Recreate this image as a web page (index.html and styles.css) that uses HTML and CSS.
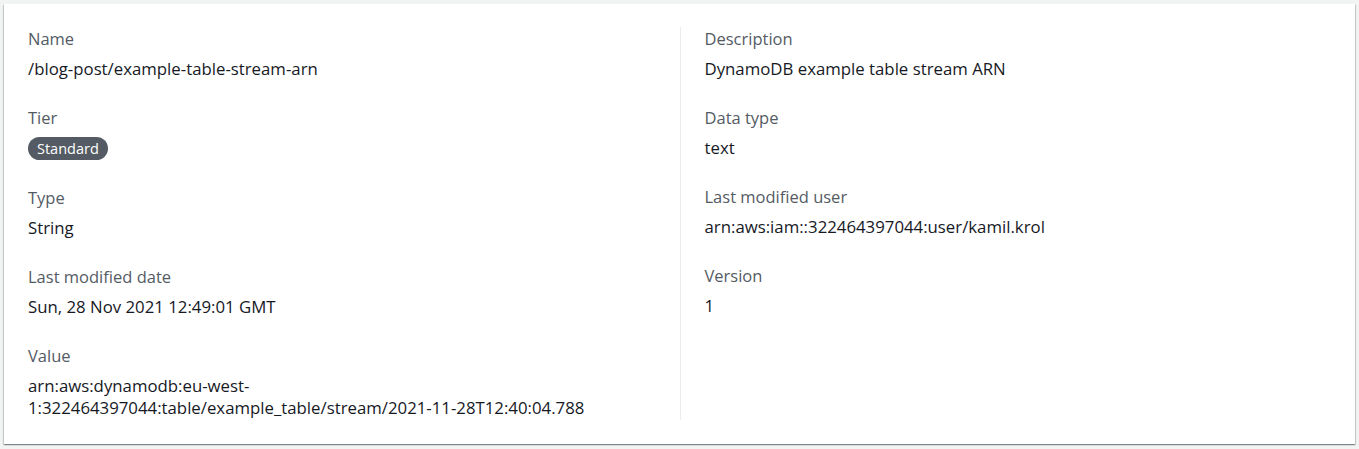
FILE: index.html
```html
<!DOCTYPE html>
<html lang="en">
<head>
<meta charset="utf-8">
<title>Parameter details</title>
<link rel="stylesheet" href="styles.css">
</head>
<body>
<div class="page">
  <section class="card">
    <div class="grid">
      <div class="col">
        <div class="item">
          <div class="label">Name</div>
          <div class="value">/blog-post/example-table-stream-arn</div>
        </div>
        <div class="item">
          <div class="label">Tier</div>
          <div class="value"><span class="badge">Standard</span></div>
        </div>
        <div class="item">
          <div class="label">Type</div>
          <div class="value">String</div>
        </div>
        <div class="item">
          <div class="label">Last modified date</div>
          <div class="value">Sun, 28 Nov 2021 12:49:01 GMT</div>
        </div>
        <div class="item">
          <div class="label">Value</div>
          <div class="value">arn:aws:dynamodb:eu-west-<br>1:322464397044:table/example_table/stream/2021-11-28T12:40:04.788</div>
        </div>
      </div>
      <div class="col col-right">
        <div class="item">
          <div class="label">Description</div>
          <div class="value">DynamoDB example table stream ARN</div>
        </div>
        <div class="item">
          <div class="label">Data type</div>
          <div class="value">text</div>
        </div>
        <div class="item">
          <div class="label">Last modified user</div>
          <div class="value">arn:aws:iam::322464397044:user/kamil.krol</div>
        </div>
        <div class="item">
          <div class="label">Version</div>
          <div class="value">1</div>
        </div>
      </div>
    </div>
  </section>
</div>
</body>
</html>
```
FILE: styles.css
```css
html, body {
  margin: 0;
  padding: 0;
}
body {
  background: #f2f3f3;
  font-family: "Open Sans", "Noto Sans", Arial, sans-serif;
  font-size: 16px;
  line-height: 22px;
  color: #16191f;
}
.page {
  padding: 4px 4px 5px 4px;
}
.card {
  background: #ffffff;
  height: 440px;
  box-sizing: border-box;
  padding: 23px 24px 24px 24px;
  box-shadow: 0 1px 1px 0 rgba(0, 28, 36, 0.3), 1px 1px 1px 0 rgba(0, 28, 36, 0.15), -1px 1px 1px 0 rgba(0, 28, 36, 0.15);
}
.grid {
  display: grid;
  grid-template-columns: 1fr 1fr;
  height: 100%;
}
.col {
  display: flex;
  flex-direction: column;
  gap: 27px;
  padding-top: 1px;
}
.col-right {
  border-left: 1px solid #eaeded;
  padding-left: 24px;
}
.item {
  display: flex;
  flex-direction: column;
  gap: 8px;
}
.label {
  color: #545b64;
  font-size: 16.5px;
}
.value {
  color: #16191f;
  font-size: 16.8px;
}
.badge {
  display: inline-block;
  vertical-align: top;
  background: #545b64;
  color: #ffffff;
  font-size: 14.5px;
  line-height: 23px;
  padding: 0 9px;
  border-radius: 12px;
}
```
